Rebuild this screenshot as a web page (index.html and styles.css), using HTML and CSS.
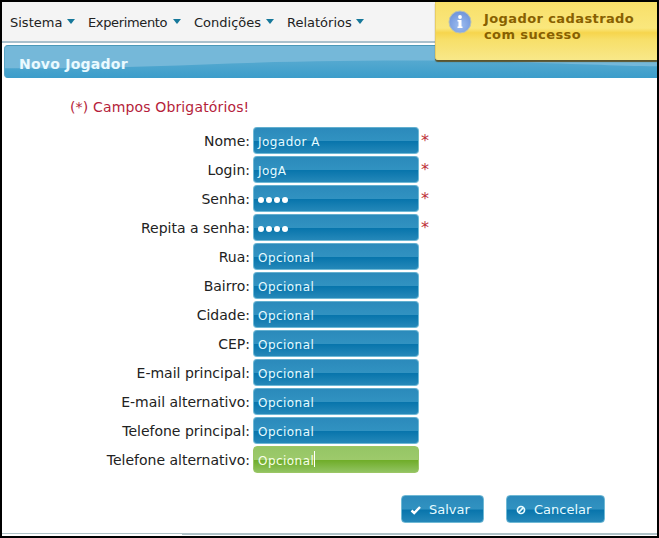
FILE: index.html
```html
<!DOCTYPE html>
<html lang="pt-BR">
<head>
<meta charset="utf-8">
<title>Novo Jogador</title>
<link rel="stylesheet" href="styles.css">
</head>
<body>
<div class="window">
  <nav class="menu">
    <span class="item sistema">Sistema<i class="arrow"></i></span>
    <span class="item experimento">Experimento<i class="arrow"></i></span>
    <span class="item condicoes">Condições<i class="arrow"></i></span>
    <span class="item relatorios">Relatórios<i class="arrow"></i></span>
  </nav>
  <header class="title">
    <svg class="wave" viewBox="0 0 653 33" preserveAspectRatio="none" aria-hidden="true"><defs><linearGradient id="sea" x1="0" y1="0" x2="0" y2="1"><stop offset="0" stop-color="#55a9d0"/><stop offset="1" stop-color="#3c9dca"/></linearGradient></defs><path d="M0 23C60 23 130 22 200 19C270 16 340 15 430 15C520 16 600 20 653 21V33H0Z" fill="url(#sea)"/></svg>
    <h1>Novo Jogador</h1>
  </header>
  <main>
    <p class="required">(*) Campos Obrigatórios!</p>
    <form class="fields">
      <div class="row"><label>Nome:</label><span class="field">Jogador A</span><span class="star">*</span></div>
      <div class="row"><label>Login:</label><span class="field">JogA</span><span class="star">*</span></div>
      <div class="row"><label>Senha:</label><span class="field dots"><i></i><i></i><i></i><i></i></span><span class="star">*</span></div>
      <div class="row"><label>Repita a senha:</label><span class="field dots"><i></i><i></i><i></i><i></i></span><span class="star">*</span></div>
      <div class="row"><label>Rua:</label><span class="field">Opcional</span></div>
      <div class="row"><label>Bairro:</label><span class="field">Opcional</span></div>
      <div class="row"><label>Cidade:</label><span class="field">Opcional</span></div>
      <div class="row"><label>CEP:</label><span class="field">Opcional</span></div>
      <div class="row"><label>E-mail principal:</label><span class="field">Opcional</span></div>
      <div class="row"><label>E-mail alternativo:</label><span class="field">Opcional</span></div>
      <div class="row"><label>Telefone principal:</label><span class="field">Opcional</span></div>
      <div class="row"><label>Telefone alternativo:</label><span class="field focus">Opcional<i class="caret"></i></span></div>
    </form>
    <div class="actions">
      <span class="button save"><svg width="12" height="12" viewBox="0 0 12 12"><path d="M1.5 6.5L4.2 9L10 3" fill="none" stroke="#fff" stroke-width="2.4"/></svg>Salvar</span>
      <span class="button cancel"><svg width="12" height="12" viewBox="0 0 12 12"><circle cx="6" cy="6" r="3.5" fill="none" stroke="#e8fbff" stroke-width="1.7"/><path d="M3.7 8.3L8.3 3.7" stroke="#e8fbff" stroke-width="1.7"/></svg>Cancelar</span>
    </div>
  </main>
  <footer class="base"><span></span></footer>
  <aside class="toast">
    <svg width="24" height="24" viewBox="0 0 24 24"><defs><radialGradient id="info" cx=".5" cy=".65" r=".6"><stop offset="0" stop-color="#9dbdf0"/><stop offset="1" stop-color="#7196dc"/></radialGradient></defs><circle cx="12" cy="12" r="11" fill="url(#info)" stroke="#b9c1b4"/><circle cx="12" cy="7" r="1.9" fill="#fff"/><path d="M9.5 10H13.5V16.5H14.5V18H9.5V16.5H10.5V11.5H9.5Z" fill="#fff"/></svg>
    <div class="message"><div class="line first">Jogador cadastrado</div><div class="line">com sucesso</div></div>
  </aside>
</div>
</body>
</html>
```
FILE: styles.css
```css
* { box-sizing: border-box; }
body { margin: 0; font: 13px/18px "DejaVu Sans", sans-serif; color: #222; }
.window { position: relative; width: 659px; height: 538px; border: 2px solid #000; background: #fff; overflow: hidden; display: flex; flex-direction: column; }
.menu { height: 41px; background: #f4f4f4; border-bottom: 2px solid #a9c0cc; display: flex; align-items: flex-start; padding: 12px 0 0 8px; }
.item { display: flex; justify-content: space-between; height: 18px; margin-right: 13px; white-space: nowrap; }
.sistema { width: 65px; }
.experimento { width: 93px; letter-spacing: -.35px; }
.condicoes { width: 80px; }
.relatorios { width: 77px; }
.arrow { width: 8px; height: 5px; margin-top: 5px; background: #16789a; clip-path: polygon(0 0, 100% 0, 50% 100%); }
.title { flex: none; height: 33px; margin: 2px 0 0 2px; position: relative; border-top: 1px solid #4b98b8; border-left: 1px solid #5aa5c6; border-radius: 4px 0 0 4px; background: #75b8d9; overflow: hidden; }
.wave { position: absolute; left: 0; top: 0; width: 100%; height: 100%; }
h1 { position: relative; margin: 0; padding: 9px 0 0 14px; font-size: 14px; line-height: 18px; letter-spacing: .25px; color: #eafaff; }
.required { margin: 20px 0 0 68px; color: #b51e3b; font-size: 14px; letter-spacing: .15px; }
.fields { margin: 11px 0 0; display: flex; flex-direction: column; gap: 2px; }
.row { height: 27px; display: flex; }
label { width: 251px; padding: 5px 3px 0 0; text-align: right; white-space: nowrap; font-size: 14px; }
.field { width: 166px; height: 27px; padding: 5px 0 0 4px; display: flex; border: 1px solid #6fb9d6; border-top-color: #63afcf; border-radius: 4px; background: linear-gradient(#2b8abb 0, #3192c1 50%, #0875ac 54%, #2588b9 100%); color: #e5fbff; font-size: 12px; letter-spacing: .45px; }
.field.focus { border-color: #9bc665; background: linear-gradient(#95c565 0, #9dca6b 50%, #70ad2a 54%, #91c361 100%); color: #f7ffe8; }
.caret { width: 1px; height: 16px; margin: -1px 0 0; background: #fff; }
.dots { gap: 2px; padding-top: 11px; }
.dots i { width: 6px; height: 6px; border-radius: 50%; background: #fff; }
.star { margin: 5px 0 0 2px; color: #bd3039; font-size: 16px; }
.actions { display: flex; gap: 22px; margin: 22px 0 0 399px; }
.button { height: 28px; display: flex; align-items: center; gap: 7px; padding: 1px 0 0 8px; border: 1px solid #70b9d5; border-radius: 4px; color: #e5fbff; background: linear-gradient(#2b8abb 0, #3192c1 50%, #0875ac 54%, #2588b9 100%); white-space: nowrap; }
.save { width: 83px; }
.cancel { width: 99px; }
.base { margin-top: auto; height: 3px; display: flex; background: linear-gradient(#b0c3c8 2px, #fff 2px); }
.base span { width: 180px; background: linear-gradient(#b0c3c8 1px, #fff 1px); }
.toast { position: absolute; left: 433px; top: 0; width: 222px; height: 58px; display: flex; padding: 8px 0 0 12px; background: linear-gradient(#f8df69 0, #fae77d 45%, #f6d54d 53%, #f7df69 65%, #f8e889 100%); border-left: 1px solid #e9ce62; border-radius: 0 0 0 3px; box-shadow: 0 2px 1px #5b542d; color: #886000; font-size: 13px; font-weight: bold; letter-spacing: .4px; }
.message { margin-left: 12px; }
.line { height: 16px; line-height: 17px; white-space: nowrap; }
```
